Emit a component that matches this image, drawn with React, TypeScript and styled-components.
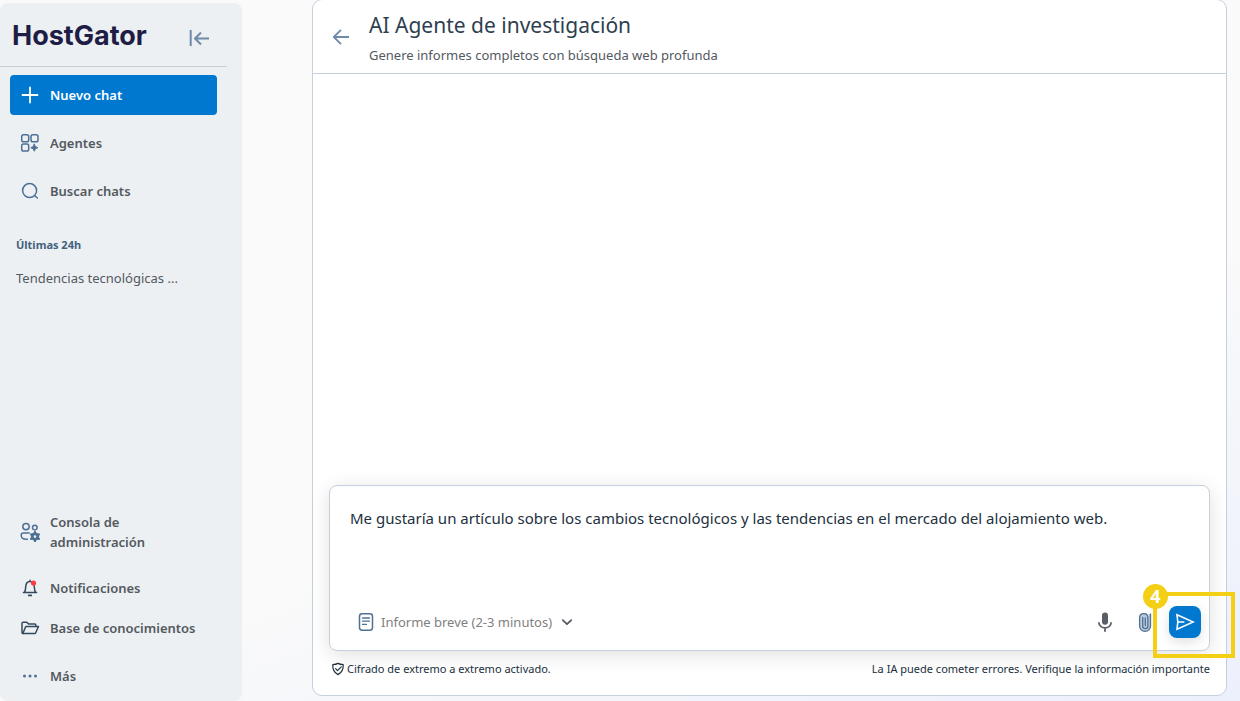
import React from 'react';
import styled, { createGlobalStyle } from 'styled-components';

const GlobalStyle = createGlobalStyle`
  *, *::before, *::after { box-sizing: border-box; }
  body { margin: 0; font-family: "Noto Sans", "Open Sans", sans-serif; color: #2e3f50; }
  button, select, textarea { font: inherit; color: inherit; margin: 0; }
  h1, h2, p { margin: 0; padding: 0; }
  svg { display: block; flex: none; }
`;

const Page = styled.div`
  display: flex;
  min-height: 100vh;
  background: linear-gradient(160deg, #fafafa 60%, #ecf0fc 100%);
`;

const Sidebar = styled.aside`
  display: flex;
  flex-direction: column;
  flex: none;
  width: 242px;
  margin-top: 3px;
  padding-bottom: 5px;
  border-radius: 8px;
  background: #ecf0f3;
`;

const Brand = styled.div`
  display: flex;
  align-items: center;
  justify-content: space-between;
  height: 64px;
  margin: 0 15px 8px 0;
  padding: 6px 17px 0 12px;
  border-bottom: 1px solid #c9cfd5;
`;

const Logo = styled.a`
  font-family: Inter, sans-serif;
  font-size: 27px;
  line-height: 32px;
  font-weight: 700;
  color: #1f1d45;
  text-decoration: none;
  margin-top: -4px;
`;

const IconButton = styled.button<{ $width?: number }>`
  display: flex;
  align-items: center;
  justify-content: center;
  width: ${(p) => (p.$width ? `${p.$width}px` : 'auto')};
  padding: 0;
  border: 0;
  background: none;
  color: #6f8aa8;
  cursor: pointer;
`;

const Nav = styled.nav`
  display: flex;
  flex-direction: column;
  gap: 8px;
  padding: 0 25px 0 10px;
`;

const NavPair = styled.div`
  display: flex;
  flex-direction: column;
`;

const NavItem = styled.button<{ $primary?: boolean; $tall?: boolean; $dark?: boolean }>`
  display: flex;
  align-items: center;
  gap: 10px;
  min-height: ${(p) => (p.$tall ? 56 : 40)}px;
  padding: 0 10px;
  border: 0;
  border-radius: 4px;
  background: ${(p) => (p.$primary ? '#0078d0' : 'transparent')};
  color: ${(p) => (p.$primary ? '#fff' : '#54595f')};
  font-size: 13px;
  line-height: 20px;
  font-weight: 600;
  text-align: left;
  cursor: pointer;
  svg { color: ${(p) => (p.$primary ? '#fff' : p.$dark ? '#34495e' : '#4f7095')}; }
`;

const History = styled.section`
  flex: 1;
  padding: 24px 16px 0;
`;

const HistoryTitle = styled.h2`
  font-size: 11px;
  line-height: 20px;
  font-weight: 700;
  color: #44627f;
`;

const HistoryLink = styled.a`
  display: block;
  margin-top: 13px;
  font-size: 13px;
  line-height: 20px;
  color: #54595f;
  text-decoration: none;
`;

const Panel = styled.main`
  display: flex;
  flex-direction: column;
  flex: 1;
  min-width: 0;
  margin: -1px 13px 5px 70px;
  border: 1px solid #c5d0de;
  border-radius: 10px;
  background: #fff;
`;

const PanelHeader = styled.header`
  display: flex;
  align-items: center;
  gap: 16px;
  height: 74px;
  padding: 0 16px;
  border-bottom: 1px solid #c5d0de;
`;

const Title = styled.h1`
  font-size: 21px;
  line-height: 32px;
  font-weight: 400;
`;

const Subtitle = styled.p`
  font-size: 13px;
  line-height: 20px;
  margin-top: 4px;
  color: #54595f;
`;

const Conversation = styled.div`
  flex: 1;
`;

const Composer = styled.form`
  position: relative;
  display: flex;
  flex-direction: column;
  height: 166px;
  margin: 0 16px;
  border: 1px solid #c5d0de;
  border-radius: 8px;
  background: #fff;
  box-shadow: 0 4px 20px rgba(0, 0, 0, 0.12);
`;

const Prompt = styled.textarea`
  flex: 1;
  width: 100%;
  padding: 20px 20px 0;
  border: 0;
  outline: 0;
  resize: none;
  background: transparent;
  font-size: 15px;
  line-height: 24px;
  color: #22303e;
`;

const Tools = styled.div`
  display: flex;
  align-items: center;
  justify-content: space-between;
  height: 32px;
  margin: 0 8px 12px 26px;
`;

const LengthField = styled.label`
  display: flex;
  align-items: center;
  gap: 5px;
  color: #4f7095;
`;

const LengthSelect = styled.select`
  appearance: none;
  padding: 0;
  border: 0;
  outline: 0;
  background: transparent;
  font-size: 13px;
  line-height: 20px;
  color: #808080;
`;

const Actions = styled.div`
  display: flex;
  align-items: center;
  gap: 8px;
`;

const SendButton = styled.button`
  display: flex;
  align-items: center;
  justify-content: center;
  width: 32px;
  height: 32px;
  padding: 0;
  border: 0;
  border-radius: 8px;
  background: #0078d0;
  color: #fff;
  box-shadow: 0 4px 12px rgba(0, 0, 0, 0.12);
`;

const Highlight = styled.div`
  position: absolute;
  right: -26px;
  bottom: -8px;
  width: 82px;
  height: 66px;
  border: 4px solid #f3d016;
  pointer-events: none;
`;

const Step = styled.span`
  position: absolute;
  left: -14px;
  top: -12px;
  width: 25px;
  height: 25px;
  border-radius: 50%;
  background: #f3d016;
  color: #fff;
  font-size: 18px;
  line-height: 24px;
  font-weight: 700;
  text-align: center;
`;

const Footnotes = styled.footer`
  display: flex;
  justify-content: space-between;
  padding: 8px 16px 16px 18px;
  font-size: 11px;
  line-height: 20px;
  color: #22303e;
`;

const Secure = styled.p`
  display: flex;
  align-items: center;
  gap: 2px;
`;

type IconProps = { size?: number; sw?: number; children: React.ReactNode };
const Icon = ({ size = 20, sw = 1.5, children }: IconProps) => (
  <svg width={size} height={size} viewBox={`0 0 ${size} ${size}`} fill="none" stroke="currentColor"
    strokeWidth={sw} strokeLinecap="round" strokeLinejoin="round" aria-hidden="true">{children}</svg>
);

const CollapseIcon = () => (
  <Icon size={22} sw={2}><path d="M2.7 3v16M21 11.500H7.500M13 5.500l-6 6 6 6" strokeLinecap="butt" /></Icon>
);
const PlusIcon = () => <Icon sw={1.8}><path d="M10 2.5v15M2.5 10h15" /></Icon>;
const AgentsIcon = () => (
  <Icon>
    <rect x="1.7" y="1.7" width="7" height="7" rx="1.8" />
    <rect x="11" y="1.7" width="7" height="7" rx="1.8" />
    <rect x="1.7" y="11" width="7" height="7" rx="1.8" />
    <path d="M14.300 11.200l1.100 2.400 2.400 1.100-2.400 1.100-1.100 2.400-1.100-2.400-2.400-1.100 2.400-1.100z" fill="currentColor" strokeWidth="1" />
  </Icon>
);
const SearchIcon = () => <Icon><circle cx="9.6" cy="9.6" r="7" /><path d="M14.8 14.8l2.6 2.2" /></Icon>;
const AdminIcon = () => (
  <Icon>
    <circle cx="6" cy="4.6" r="3.2" />
    <circle cx="14.8" cy="5.6" r="2.3" />
    <path d="M9.2 11H3.400A2.200 2.200 0 0 0 1.200 13.200c0 2.600 2.200 4 5 4h1.200" />
    <circle cx="15" cy="14.600" r="2.700" strokeWidth="2.800" />
    <path d="M15 10.200v1M15 18v1M11.200 12.400l.8.500M18 16.300l.8.500M11.200 16.800l.8-.5M18 12.900l.8-.5" strokeWidth="2.400" />
  </Icon>
);
const BellIcon = () => (
  <Icon>
    <path d="M10 2.2v1M3.4 14.6h13.2M4.3 14.4c1.2-1.3 1.3-3 1.4-5.5.1-3.4 1.7-5.4 4.3-5.4s4.200 2 4.300 5.400c.1 2.500.2 4.200 1.400 5.500" />
    <path d="M8.800 17.400h2.400" strokeWidth="1.800" />
    <circle cx="13.500" cy="5" r="2.600" fill="#ff3b3b" stroke="none" />
  </Icon>
);
const FolderIcon = () => (
  <Icon>
    <path d="M3.200 15.500 2 14.800V5.200c0-.6.4-1 1-1h3.700l1.900 1.700h6.200c.6 0 1 .4 1 1v1.500" />
    <path d="M2.800 15.500 5.800 8.500h12.700l-2.800 6.300c-.2.500-.5.700-1 .7z" />
  </Icon>
);
const MoreIcon = () => (
  <Icon>
    <g fill="currentColor" stroke="none">
      <circle cx="4.500" cy="10" r="1.500" /><circle cx="10" cy="10" r="1.500" /><circle cx="15.500" cy="10" r="1.500" />
    </g>
  </Icon>
);
const BackIcon = () => <Icon size={24} sw={1.800}><path d="M20 12H5M12 4.800 4.800 12l7.200 7.200" strokeLinecap="butt" /></Icon>;
const ReportIcon = () => (
  <Icon>
    <rect x="3.500" y="1.800" width="13" height="16.400" rx="2.600" />
    <path d="M6.500 6h7M6.500 9.200h7M6.500 12.400h4" strokeWidth="1.300" />
  </Icon>
);
const ChevronIcon = () => <Icon size={18} sw={1.800}><path d="M4.800 7.200 9 11.200 13.200 7.200" stroke="#54595f" /></Icon>;
const MicIcon = () => (
  <Icon size={24}>
    <path d="M12 2.500a3 3 0 0 0-3 3v6.200a3 3 0 0 0 6 0V5.500a3 3 0 0 0-3-3z" fill="#5a5f66" stroke="none" />
    <path d="M5.800 12.200c.2 3.300 3 5.600 6.200 5.600s6-2.300 6.200-5.600M12 18v3.800" stroke="#5a5f66" strokeWidth="1.800" strokeLinecap="butt" />
  </Icon>
);
const ClipIcon = () => (
  <Icon size={24} sw={1.300}>
    <path d="M6.500 7.500a4.500 4.500 0 0 1 9-.5V4h2v12a5.300 5.300 0 0 1-11 0z" fill="#bccbdc" stroke="none" />
    <path d="M17.500 4v12a5.400 5.400 0 0 1-10.900 0V7.200a4.200 4.200 0 0 1 8.300 0v8.900a2.600 2.600 0 0 1-5.200 0V7.500M12.300 8v7.500" stroke="#4f7095" />
  </Icon>
);
const SendIcon = () => (
  <Icon sw={1.600}><path d="M2 2.800 18.200 10 2 17.200l.8-7.200zM2.800 10h6" strokeLinejoin="miter" /></Icon>
);
const ShieldIcon = () => (
  <Icon size={14} sw={1.200}>
    <path d="M7 1.400c1.700.9 3.400 1.200 5.200 1.300.3 4.800-1.600 8-5.200 9.900C3.400 10.700 1.500 7.500 1.800 2.700 3.600 2.600 5.300 2.300 7 1.400z" />
    <path d="M4.600 6.700 6.500 8.600 10.200 4.800" />
  </Icon>
);

export default function App() {
  return (
    <>
      <GlobalStyle />
      <Page>
        <Sidebar>
          <Brand>
            <Logo href="#">HostGator</Logo>
            <IconButton aria-label="Contraer menú"><CollapseIcon /></IconButton>
          </Brand>
          <Nav aria-label="Principal">
            <NavItem $primary><PlusIcon />Nuevo chat</NavItem>
            <NavItem><AgentsIcon />Agentes</NavItem>
            <NavItem><SearchIcon />Buscar chats</NavItem>
          </Nav>
          <History>
            <HistoryTitle>Últimas 24h</HistoryTitle>
            <HistoryLink href="#">Tendencias tecnológicas ...</HistoryLink>
          </History>
          <Nav aria-label="Cuenta">
            <NavItem $tall><AdminIcon /><span>Consola de<br />administración</span></NavItem>
            <NavPair>
              <NavItem $dark><BellIcon />Notificaciones</NavItem>
              <NavItem $dark><FolderIcon />Base de conocimientos</NavItem>
            </NavPair>
            <NavItem><MoreIcon />Más</NavItem>
          </Nav>
        </Sidebar>

        <Panel>
          <PanelHeader>
            <IconButton aria-label="Volver"><BackIcon /></IconButton>
            <div>
              <Title>AI Agente de investigación</Title>
              <Subtitle>Genere informes completos con búsqueda web profunda</Subtitle>
            </div>
          </PanelHeader>
          <Conversation />
          <Composer>
            <Prompt
              aria-label="Mensaje"
              defaultValue="Me gustaría un artículo sobre los cambios tecnológicos y las tendencias en el mercado del alojamiento web."
            />
            <Tools>
              <LengthField>
                <ReportIcon />
                <LengthSelect aria-label="Tipo de informe">
                  <option>Informe breve (2-3 minutos)</option>
                </LengthSelect>
                <ChevronIcon />
              </LengthField>
              <Actions>
                <IconButton type="button" $width={32} aria-label="Dictar"><MicIcon /></IconButton>
                <IconButton type="button" $width={32} aria-label="Adjuntar archivo"><ClipIcon /></IconButton>
                <SendButton type="button" aria-label="Enviar"><SendIcon /></SendButton>
              </Actions>
            </Tools>
            <Highlight><Step>4</Step></Highlight>
          </Composer>
          <Footnotes>
            <Secure><ShieldIcon />Cifrado de extremo a extremo activado.</Secure>
            <p>La IA puede cometer errores. Verifique la información importante</p>
          </Footnotes>
        </Panel>
      </Page>
    </>
  );
}
